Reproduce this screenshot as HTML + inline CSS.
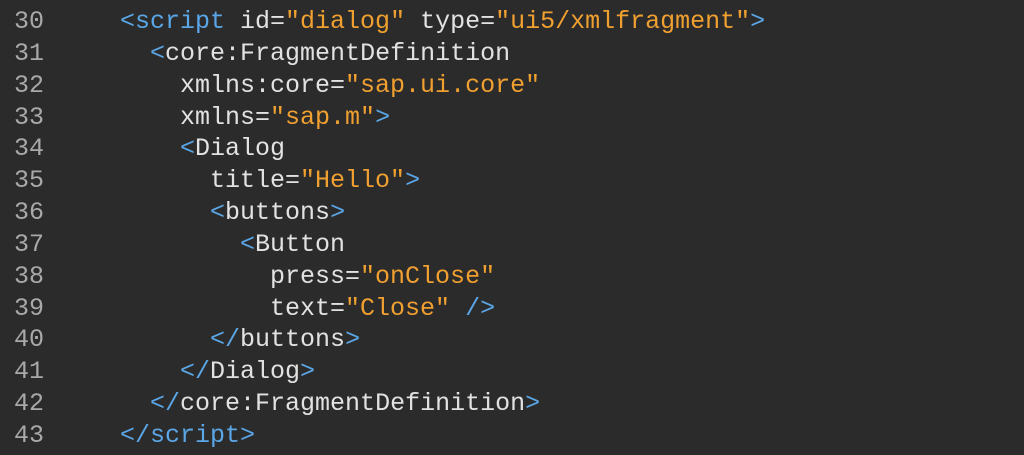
<!DOCTYPE html>
<html><head><meta charset="utf-8"><style>
html,body{margin:0;padding:0;background:#2b2b2b;width:1024px;height:455px;overflow:hidden}
pre{margin:0;padding:6px 0 0 0;font-family:"Liberation Mono","DejaVu Sans Mono",monospace;font-size:25px;line-height:31.85px;color:#e2e2e2;white-space:pre}
.n{color:#a9a9a9;display:inline-block;width:120px;padding-left:14px;box-sizing:border-box}
.b{color:#5aa6e6}
.s{color:#f0a030}
</style></head><body><pre>
<span class="n">30</span><span class="b">&lt;script</span> id=<span class="s">"dialog"</span> type=<span class="s">"ui5/xmlfragment"</span><span class="b">&gt;</span>
<span class="n">31</span>  <span class="b">&lt;</span>core:FragmentDefinition
<span class="n">32</span>    xmlns:core=<span class="s">"sap.ui.core"</span>
<span class="n">33</span>    xmlns=<span class="s">"sap.m"</span><span class="b">&gt;</span>
<span class="n">34</span>    <span class="b">&lt;</span>Dialog
<span class="n">35</span>      title=<span class="s">"Hello"</span><span class="b">&gt;</span>
<span class="n">36</span>      <span class="b">&lt;</span>buttons<span class="b">&gt;</span>
<span class="n">37</span>        <span class="b">&lt;</span>Button
<span class="n">38</span>          press=<span class="s">"onClose"</span>
<span class="n">39</span>          text=<span class="s">"Close"</span> <span class="b">/&gt;</span>
<span class="n">40</span>      <span class="b">&lt;/</span>buttons<span class="b">&gt;</span>
<span class="n">41</span>    <span class="b">&lt;/</span>Dialog<span class="b">&gt;</span>
<span class="n">42</span>  <span class="b">&lt;/</span>core:FragmentDefinition<span class="b">&gt;</span>
<span class="n">43</span><span class="b">&lt;/script&gt;</span>
</pre></body></html>
